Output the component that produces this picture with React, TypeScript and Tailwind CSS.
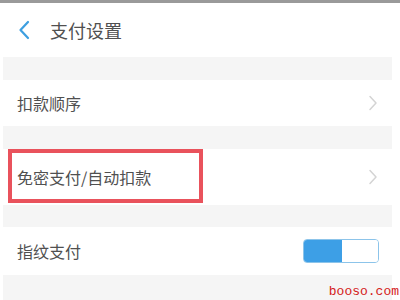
import React from 'react';

const font = { fontFamily: '"Noto Sans CJK SC", "Noto Sans", sans-serif' };

const Chevron = () => (
    <svg width="10" height="16" viewBox="0 0 10 16" className="shrink-0">
        <path d="M2 1.5 L8 8 L2 14.5" fill="none" stroke="#d4d4d4" strokeWidth="1.5" strokeLinecap="round" strokeLinejoin="round" />
    </svg>
);

const Gap = ({ h }: { h: string }) => <div className={`bg-[#f5f5f5] ${h}`} />;

export default function App() {
    return (
        <div className="w-[400px] h-[300px] bg-white overflow-hidden relative" style={font}>
            <div className="h-[3px] bg-[#9a9a9a]" />
            <div className="h-[54px] flex items-center pl-[18px]">
                <svg width="12" height="20" viewBox="0 0 12 20" className="shrink-0">
                    <path d="M10 2 L2.5 10 L10 18" fill="none" stroke="#3d9fe0" strokeWidth="2.2" strokeLinecap="round" strokeLinejoin="round" />
                </svg>
                <span className="ml-[20px] text-[18px] text-[#505050] leading-none">支付设置</span>
            </div>
            <div className="pl-[3px] pr-[8px]">
                <Gap h="h-[23px]" />
                <div className="h-[46px] flex items-center justify-between pl-[14px] pr-[14px]">
                    <span className="text-[16px] text-[#505050]">扣款顺序</span>
                    <Chevron />
                </div>
                <Gap h="h-[23px]" />
                <div className="relative h-[56px] flex items-center justify-between pl-[14px] pr-[14px]">
                    <span className="text-[16px] text-[#505050]">免密支付/自动扣款</span>
                    <Chevron />
                    <div className="absolute left-[5px] top-0 w-[195px] h-[54px] border-[4px] border-[#e9525c]" />
                </div>
                <Gap h="h-[22px]" />
                <div className="h-[48px] flex items-center justify-between pl-[14px] pr-[13px]">
                    <span className="text-[16px] text-[#505050]">指纹支付</span>
                    <div className="w-[76px] h-[24px] rounded-[4px] border border-[#8cc4ea] flex overflow-hidden">
                        <div className="w-[38px] bg-[#3d9fe6]" />
                        <div className="flex-1 bg-white" />
                    </div>
                </div>
                <Gap h="h-[25px]" />
            </div>
            <span className="absolute right-[1px] bottom-[2px] text-[13px] leading-none text-[#d42020]" style={{ fontFamily: '"Liberation Mono", monospace' }}>booso.com</span>
        </div>
    );
}
